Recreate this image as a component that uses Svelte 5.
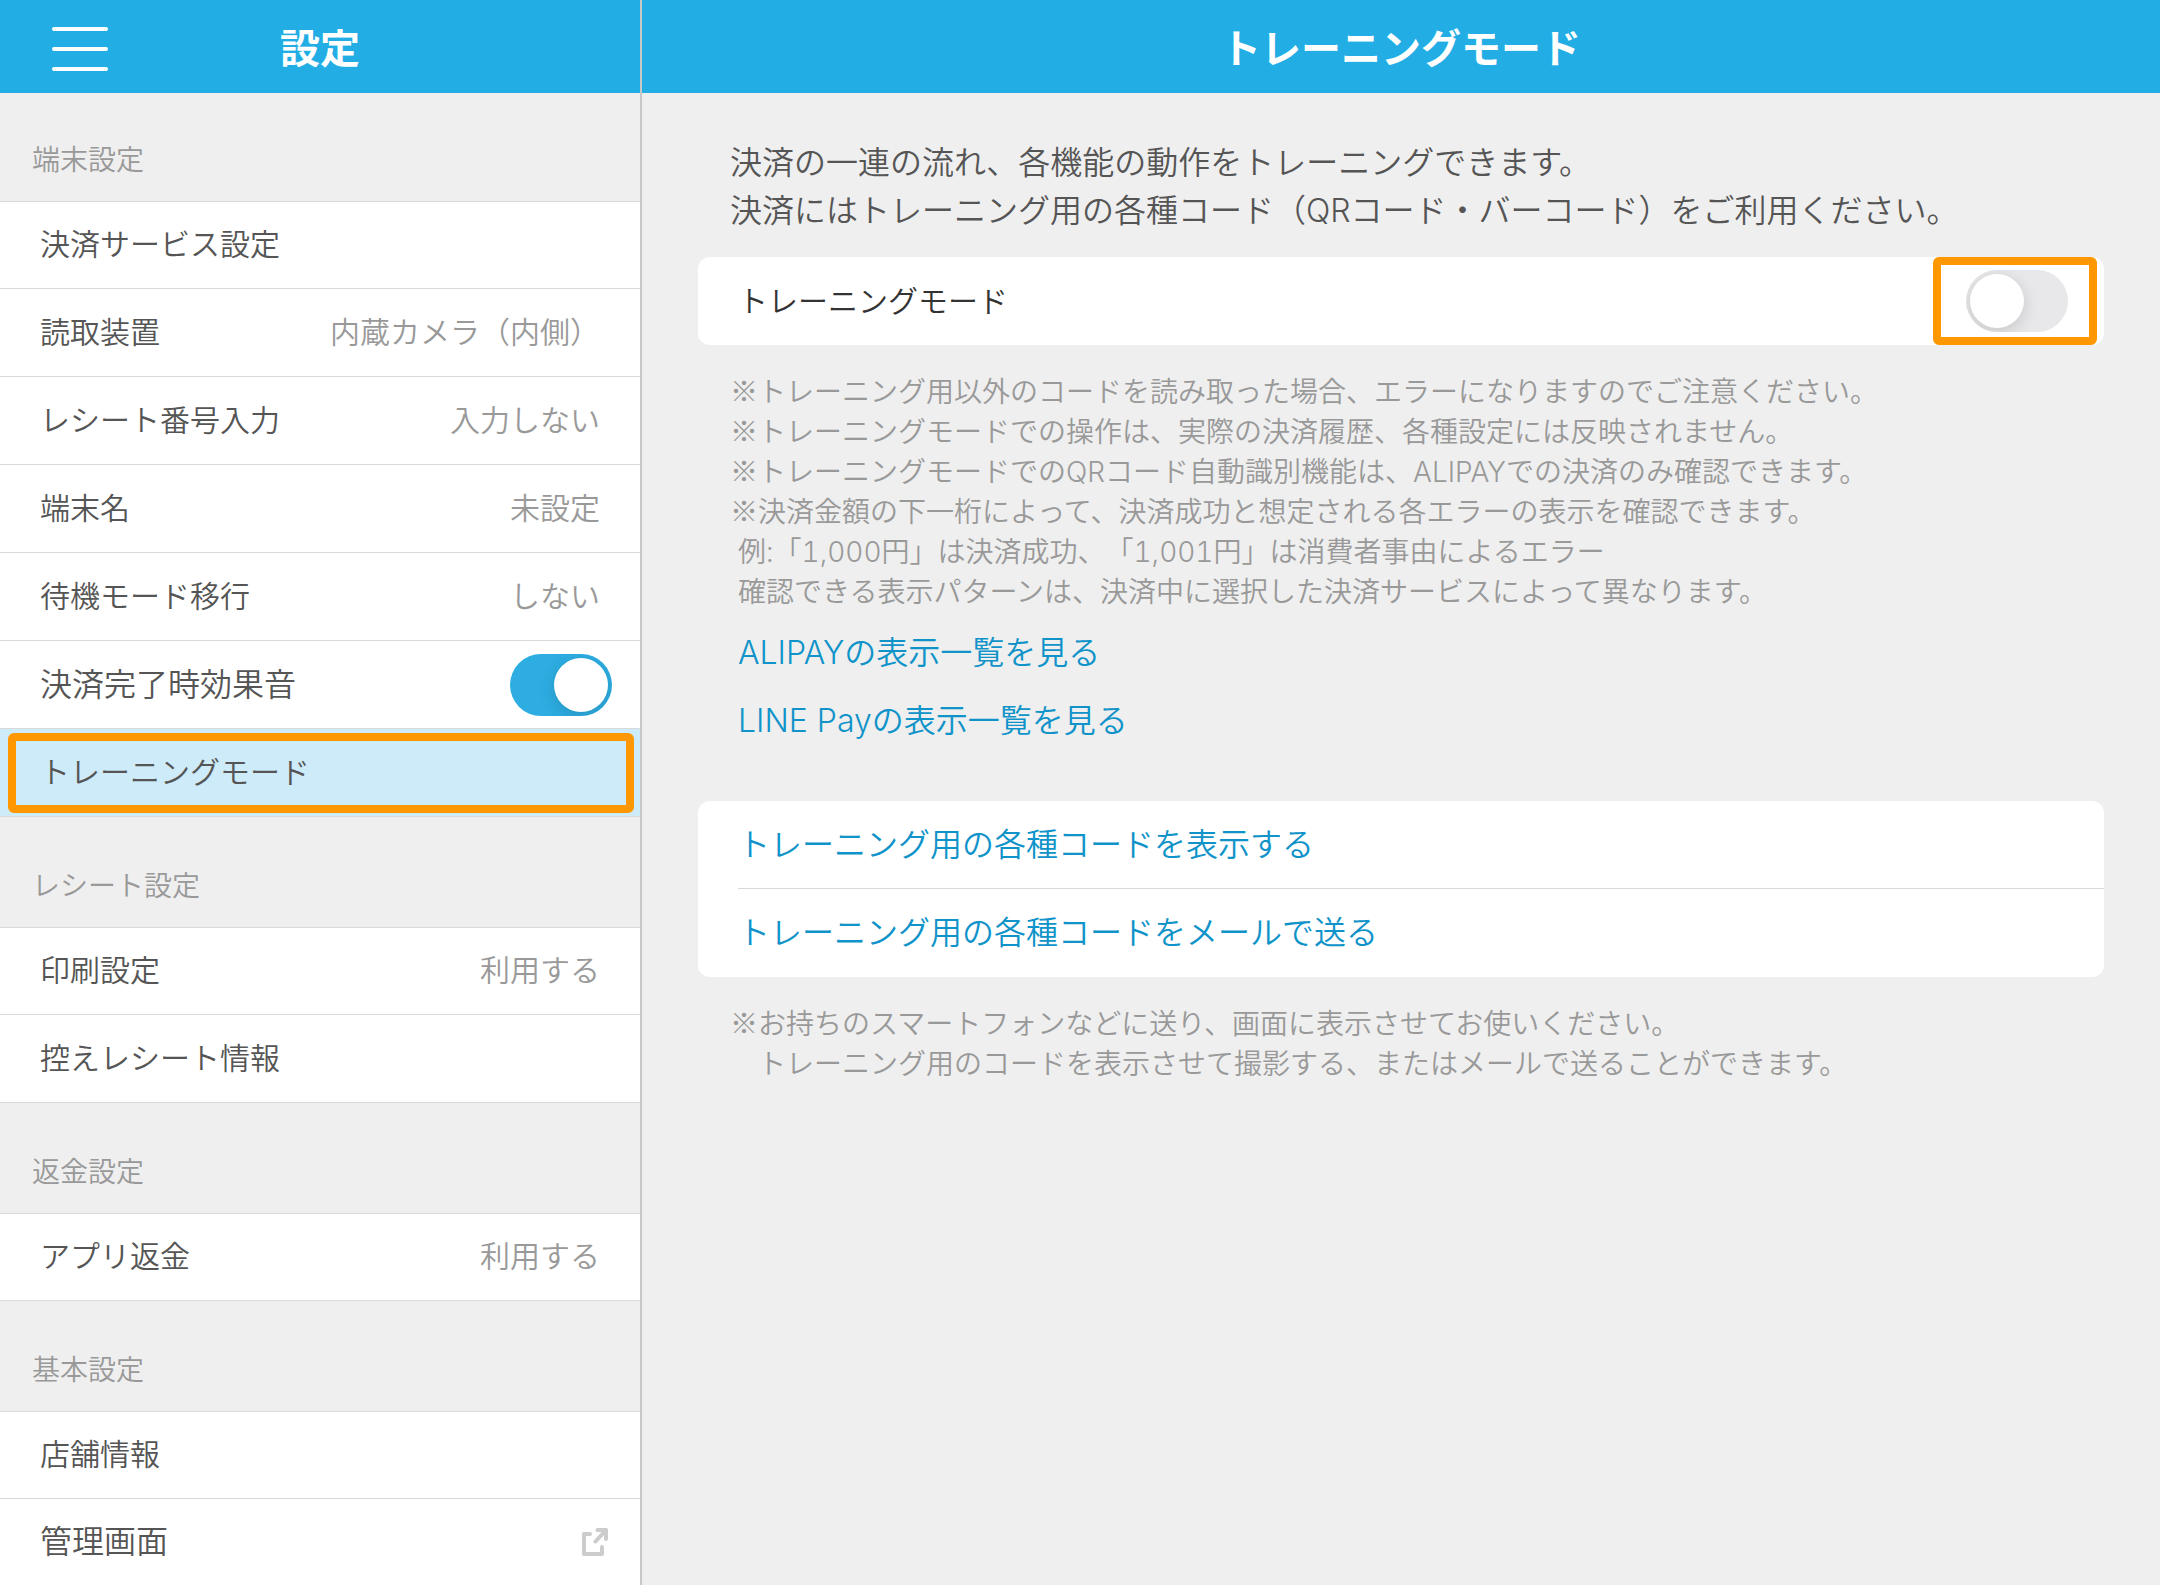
<script lang="ts">
  type Item = {
    label: string;
    value?: string;
    selected?: boolean;
    toggle?: boolean;
    external?: boolean;
  };

  const groups: { title: string; items: Item[] }[] = [
    {
      title: "端末設定",
      items: [
        { label: "決済サービス設定" },
        { label: "読取装置", value: "内蔵カメラ（内側）" },
        { label: "レシート番号入力", value: "入力しない" },
        { label: "端末名", value: "未設定" },
        { label: "待機モード移行", value: "しない" },
        { label: "決済完了時効果音", toggle: true },
        { label: "トレーニングモード", selected: true },
      ],
    },
    {
      title: "レシート設定",
      items: [{ label: "印刷設定", value: "利用する" }, { label: "控えレシート情報" }],
    },
    {
      title: "返金設定",
      items: [{ label: "アプリ返金", value: "利用する" }],
    },
    {
      title: "基本設定",
      items: [{ label: "店舗情報" }, { label: "管理画面", external: true }],
    },
  ];

  const trainingNotes = [
    "トレーニング用以外のコードを読み取った場合、エラーになりますのでご注意ください。",
    "トレーニングモードでの操作は、実際の決済履歴、各種設定には反映されません。",
    "トレーニングモードでのQRコード自動識別機能は、ALIPAYでの決済のみ確認できます。",
    "決済金額の下一桁によって、決済成功と想定される各エラーの表示を確認できます。",
  ];

  let sound = $state(true);
  let training = $state(false);
</script>

<div class="app">
  <aside class="sidebar">
    <header class="bar">
      <button class="menu" aria-label="メニュー">
        <span></span>
        <span></span>
        <span></span>
      </button>
      <h2 class="bar-title">設定</h2>
    </header>

    <nav>
      {#each groups as group}
        <section class="group">
          <h3 class="group-title">{group.title}</h3>
          <ul class="rows">
            {#each group.items as item}
              <li>
                {#if item.toggle}
                  <label class="row large">
                    <span>{item.label}</span>
                    <input class="switch" type="checkbox" role="switch" bind:checked={sound} />
                  </label>
                {:else if item.external}
                  <a class="row large" href="#admin">
                    <span>{item.label}</span>
                    <svg class="external" viewBox="0 0 26 28" aria-hidden="true">
                      <path d="M8 6H2v20h18v-7" />
                      <path d="M15.500 2H24v9M24 2L13.500 13.500" />
                    </svg>
                  </a>
                {:else}
                  <button class="row" class:selected={item.selected}>
                    <span>{item.label}</span>
                    {#if item.value}<span class="value">{item.value}</span>{/if}
                  </button>
                {/if}
              </li>
            {/each}
          </ul>
        </section>
      {/each}
    </nav>
  </aside>

  <main class="detail">
    <header class="bar">
      <h1 class="bar-title">トレーニングモード</h1>
    </header>

    <div class="content">
      <p class="intro">
        決済の一連の流れ、各機能の動作をトレーニングできます。<br />
        決済にはトレーニング用の各種コード（QRコード・バーコード）をご利用ください。
      </p>

      <div class="card toggle-card">
        <label for="training">トレーニングモード</label>
        <span class="highlight">
          <input id="training" class="switch" type="checkbox" role="switch" bind:checked={training} />
        </span>
      </div>

      <div class="notes">
        {#each trainingNotes as note}
          <p><span class="ref-mark">※</span>{note}</p>
        {/each}
        <p class="indent">例:「1,000円」は決済成功、「1,001円」は消費者事由によるエラー</p>
        <p class="indent">確認できる表示パターンは、決済中に選択した決済サービスによって異なります。</p>
      </div>

      <div class="links">
        <a href="#alipay">ALIPAYの表示一覧を見る</a>
        <a href="#linepay">LINE Payの表示一覧を見る</a>
      </div>

      <div class="card actions">
        <a href="#codes">トレーニング用の各種コードを表示する</a>
        <a href="#mail">トレーニング用の各種コードをメールで送る</a>
      </div>

      <div class="notes">
        <p><span class="ref-mark">※</span>お持ちのスマートフォンなどに送り、画面に表示させてお使いください。</p>
        <p>　トレーニング用のコードを表示させて撮影する、またはメールで送ることができます。</p>
      </div>
    </div>
  </main>
</div>

<style>
  :global(body) { background: #efefef; }

  .app {
    --blue: #22ade5;
    --link: #0f93c9;
    --line: #d9d9d9;
    --text: #555;
    --muted: #999;
    --mark: #ff9800;
    display: grid;
    grid-template-columns: 642px 1fr;
    min-height: 100vh;
    font-family: Inter, "Noto Sans CJK JP", sans-serif;
    font-size: 30px;
    font-weight: 350;
    line-height: 40px;
    color: var(--text);
    text-spacing-trim: space-all;
    font-feature-settings: "chws" 0, "halt" 0;
  }
  .app * { box-sizing: border-box; }
  h1, h2, h3, p, ul { margin: 0; padding: 0; }
  a { text-decoration: none; }
  button {
    border: 0;
    background: none;
    font: inherit;
    color: inherit;
  }

  .sidebar { border-right: 2px solid #c8c8c8; }

  .bar {
    position: relative;
    display: flex;
    align-items: center;
    justify-content: center;
    height: 93px;
    padding-top: 5px;
    background: var(--blue);
    color: #fff;
  }
  .bar-title {
    font-size: 40px;
    font-weight: 700;
    line-height: 56px;
  }
  .menu {
    position: absolute;
    left: 52px;
    display: flex;
    flex-direction: column;
    gap: 16px;
    width: 56px;
    padding: 0;
    cursor: pointer;
  }
  .menu span {
    height: 4px;
    border-radius: 2px;
    background: #fff;
  }

  .group-title {
    padding: 49px 32px 21px;
    border-bottom: 1px solid var(--line);
    font-size: 28px;
    font-weight: 350;
    color: var(--muted);
  }
  .group:first-child .group-title { padding-top: 47px; }
  .rows { list-style: none; }
  .row {
    position: relative;
    display: flex;
    align-items: center;
    justify-content: space-between;
    width: 100%;
    height: 88px;
    padding: 0 40px 2px;
    border-bottom: 1px solid var(--line);
    background: #fff;
    color: var(--text);
    text-align: left;
    cursor: pointer;
  }
  li:first-child .row { height: 87px; }
  .group:last-child li:last-child .row { border-bottom: 0; height: 86px; }
  .row.large { padding: 0 28px 0 40px; font-size: 32px; }
  .value { color: var(--muted); }
  .row.selected { background: #cdebf9; }
  .row.selected::after {
    content: "";
    position: absolute;
    inset: 4px 6px 3px 8px;
    border: 8px solid var(--mark);
    border-radius: 6px;
  }
  .external {
    width: 26px;
    height: 28px;
    margin-right: 4px;
    fill: none;
    stroke: #ccc;
    stroke-width: 4;
    stroke-linecap: round;
    stroke-linejoin: round;
  }

  .switch {
    appearance: none;
    flex: none;
    width: 102px;
    height: 62px;
    margin: 0;
    padding: 4px;
    border-radius: 31px;
    background: #e8e8ea;
    overflow: hidden;
    cursor: pointer;
  }
  .switch::before {
    content: "";
    display: block;
    width: 54px;
    height: 54px;
    border-radius: 50%;
    background: #fff;
    box-shadow: 0 4px 16px rgba(0, 0, 0, 0.15);
  }
  .switch:checked { background: #2dade2; }
  .switch:checked::before { margin-left: 40px; }

  .content { padding: 46px 56px; }
  .intro {
    padding: 0 32px;
    margin-bottom: 22px;
    font-size: 32px;
    line-height: 48px;
  }
  .card {
    border-radius: 12px;
    background: #fff;
  }
  .toggle-card {
    display: flex;
    align-items: center;
    justify-content: space-between;
    height: 88px;
    padding: 0 7px 0 40px;
    color: #333;
  }
  .highlight {
    display: flex;
    align-items: center;
    justify-content: flex-end;
    width: 164px;
    height: 88px;
    padding-right: 21px;
    border: 8px solid var(--mark);
    border-radius: 6px;
  }
  .notes {
    padding: 27px 32px 0;
    font-size: 28px;
    font-variant-numeric: tabular-nums;
    color: var(--muted);
  }
  .ref-mark { font-family: "Noto Sans CJK JP", sans-serif; line-height: 1; }
  .indent { padding-left: 8px; }

  .links {
    display: flex;
    flex-direction: column;
    align-items: flex-start;
    padding: 7px 40px 0;
    margin-bottom: 46px;
    font-size: 32px;
    line-height: 68px;
  }
  .links a, .actions a { color: var(--link); }
  .actions {
    padding-left: 40px;
    font-size: 32px;
  }
  .actions a {
    display: flex;
    align-items: center;
    height: 88px;
  }
  .actions a:first-child { border-bottom: 1px solid var(--line); }
</style>
